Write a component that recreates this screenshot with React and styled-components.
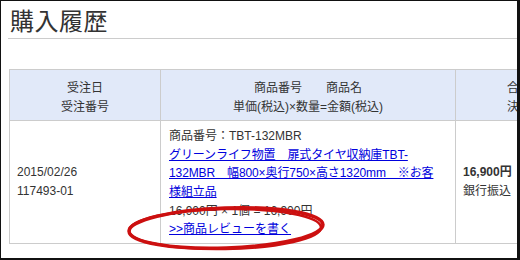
import React from "react";
import styled, { createGlobalStyle } from "styled-components";

const GlobalStyle = createGlobalStyle`
  html, body {
    margin: 0;
    padding: 0;
    background: #fff;
  }
  body {
    font-family: "Liberation Sans", "Noto Sans CJK JP", sans-serif;
    color: #333;
  }
`;

const Frame = styled.div`
  position: relative;
  box-sizing: border-box;
  width: 520px;
  height: 260px;
  overflow: hidden;
  background: #fff;
  border-style: solid;
  border-color: #111;
  border-width: 1px 3px 2px 1px;
`;

const Title = styled.h1`
  margin: 0 0 0 7px;
  padding: 6px 0 1px 2px;
  font-size: 24px;
  line-height: 30px;
  font-weight: normal;
  letter-spacing: 0.5px;
  color: #333;
  border-bottom: 1px solid #ccc;
`;

const Table = styled.table`
  margin: 30px 0 0 8px;
  width: 597px;
  table-layout: fixed;
  border-collapse: collapse;
  font-size: 12px;
  line-height: 18.6px;
`;

const HeadCell = styled.th`
  padding: 9px 6px 4px;
  background: #e1e9f9;
  border: 1px solid #ccc;
  font-weight: normal;
  text-align: center;
  color: #333;
  white-space: nowrap;
`;

const Cell = styled.td`
  padding: ${(p) => (p.$top ? "6px 8px 4px" : "0 7px")};
  vertical-align: ${(p) => (p.$top ? "top" : "middle")};
  border: 1px solid #ccc;
  color: #333;
`;

const Line = styled.div`
  white-space: nowrap;
  font-weight: ${(p) => (p.$bold ? "bold" : "normal")};
`;

const ProductLink = styled.a`
  display: block;
  color: #0000dd;
  text-decoration: underline;
  white-space: nowrap;
  letter-spacing: -0.1px;
`;

const ReviewLink = styled(ProductLink)`
  letter-spacing: 0;
`;

const Mark = styled.svg`
  position: absolute;
  left: 123px;
  top: 202px;
  pointer-events: none;
`;

export default function App() {
  return (
    <Frame>
      <GlobalStyle />
      <Title>購入履歴</Title>
      <Table>
        <colgroup>
          <col style={{ width: 151 }} />
          <col style={{ width: 295 }} />
          <col style={{ width: 151 }} />
        </colgroup>
        <thead>
          <tr>
            <HeadCell>受注日<br />受注番号</HeadCell>
            <HeadCell>商品番号　　商品名<br />単価(税込)×数量=金額(税込)</HeadCell>
            <HeadCell>合計金額<br />決済方法</HeadCell>
          </tr>
        </thead>
        <tbody>
          <tr>
            <Cell>
              <Line>2015/02/26</Line>
              <Line>117493-01</Line>
            </Cell>
            <Cell $top>
              <Line>商品番号：TBT-132MBR</Line>
              <ProductLink href="#">
                グリーンライフ物置　扉式タイヤ収納庫TBT-<br />
                132MBR　幅800×奥行750×高さ1320mm　※お客<br />
                様組立品
              </ProductLink>
              <Line>16,900円 × 1個 = 16,900円</Line>
              <ReviewLink href="#">&gt;&gt;商品レビューを書く</ReviewLink>
            </Cell>
            <Cell>
              <Line $bold>16,900円</Line>
              <Line>銀行振込</Line>
            </Cell>
          </tr>
        </tbody>
      </Table>
      <Mark width="206" height="52" viewBox="0 0 206 52">
        <ellipse cx="102" cy="25" rx="97" ry="20" fill="none" stroke="#cc1010" strokeWidth="3.5" transform="rotate(-2 102 25)" />
        <ellipse cx="101" cy="26" rx="96" ry="20" fill="none" stroke="#cc1010" strokeWidth="2.5" transform="rotate(-1 101 26)" />
      </Mark>
    </Frame>
  );
}
